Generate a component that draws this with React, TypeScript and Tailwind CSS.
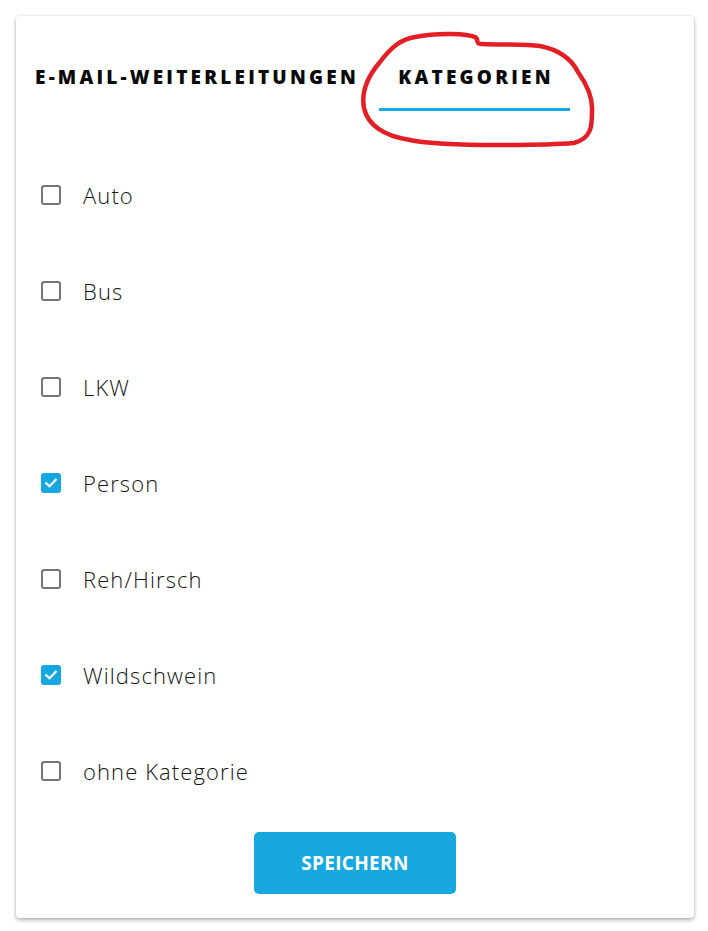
import React, { useState } from "react";

const items = [
  { label: "Auto", checked: false },
  { label: "Bus", checked: false },
  { label: "LKW", checked: false },
  { label: "Person", checked: true },
  { label: "Reh/Hirsch", checked: false },
  { label: "Wildschwein", checked: true },
  { label: "ohne Kategorie", checked: false },
];

function Box({ checked }: { checked: boolean }) {
  if (checked) {
    return (
      <span className="flex h-[20px] w-[20px] items-center justify-center rounded-[3px] bg-[#17a8df]">
        <svg width="16" height="16" viewBox="0 0 16 16" fill="none">
          <path d="M3.2 8.2 L6.5 11.3 L12.8 4.8" stroke="white" strokeWidth="2.2" strokeLinecap="square" />
        </svg>
      </span>
    );
  }
  return <span className="block h-[20px] w-[20px] rounded-[3px] border-2 border-[#767676] bg-white" />;
}

export default function App() {
  const [state, setState] = useState(items.map((i) => i.checked));
  return (
    <div className="min-h-[931px] w-[708px] bg-white pt-[16px] pl-[16px]" style={{ fontFamily: "'Open Sans', 'Noto Sans', sans-serif" }}>
      <div className="relative h-[902px] w-[678px] rounded-[4px] bg-white shadow-[0_2px_4px_rgba(0,0,0,0.3),0_0_3px_rgba(0,0,0,0.08)]">
        <div className="flex pt-[34px]">
          <div className="flex h-[61px] items-start pl-[19px] pt-[16px]">
            <span className="w-[343px] whitespace-nowrap text-[19px] font-extrabold tracking-[3.2px] text-[#0a0a0a] leading-[22px]">E-MAIL-WEITERLEITUNGEN</span>
          </div>
          <div className="ml-[1px] flex h-[61px] w-[191px] flex-col items-center border-b-[3px] border-[#17a8df] pt-[16px] pl-[3px]">
            <span className="whitespace-nowrap text-[19px] font-extrabold tracking-[3.2px] text-[#0a0a0a] leading-[22px]">KATEGORIEN</span>
          </div>
        </div>
        <div className="mt-[36px] flex flex-col">
          {items.map((it, i) => (
            <label key={it.label} className="flex h-[96px] items-center pl-[25px] cursor-pointer" onClick={() => setState((s) => s.map((v, j) => (j === i ? !v : v)))}>
              <Box checked={state[i]} />
              <span className="ml-[22px] text-[22px] font-light tracking-[1.1px] text-[#151515] leading-[26px]">{it.label}</span>
            </label>
          ))}
        </div>
        <div className="mt-[13px] flex justify-center">
          <button className="h-[62px] w-[202px] rounded-[5px] bg-[#17a8df] text-[19px] font-bold text-white tracking-[0.3px]">SPEICHERN</button>
        </div>
        <svg className="pointer-events-none absolute left-0 top-0" width="678" height="160" viewBox="16 16 678 160" fill="none">
          <path
            d="M415 37 C 440 32, 468 34, 475 37 C 480 40, 474 44, 482 44 C 500 45, 525 44, 540 46 C 560 50, 572 60, 578 72 C 588 86, 593 98, 592 112 C 592 125, 592 138, 574 143 C 550 145, 520 145, 497 145 C 460 145, 430 144, 410 140 C 385 136, 368 126, 364 108 C 361 92, 368 76, 380 62 C 392 46, 402 39, 415 37 Z"
            stroke="#e31e24"
            strokeWidth="4.5"
            strokeLinejoin="round"
          />
        </svg>
      </div>
    </div>
  );
}
